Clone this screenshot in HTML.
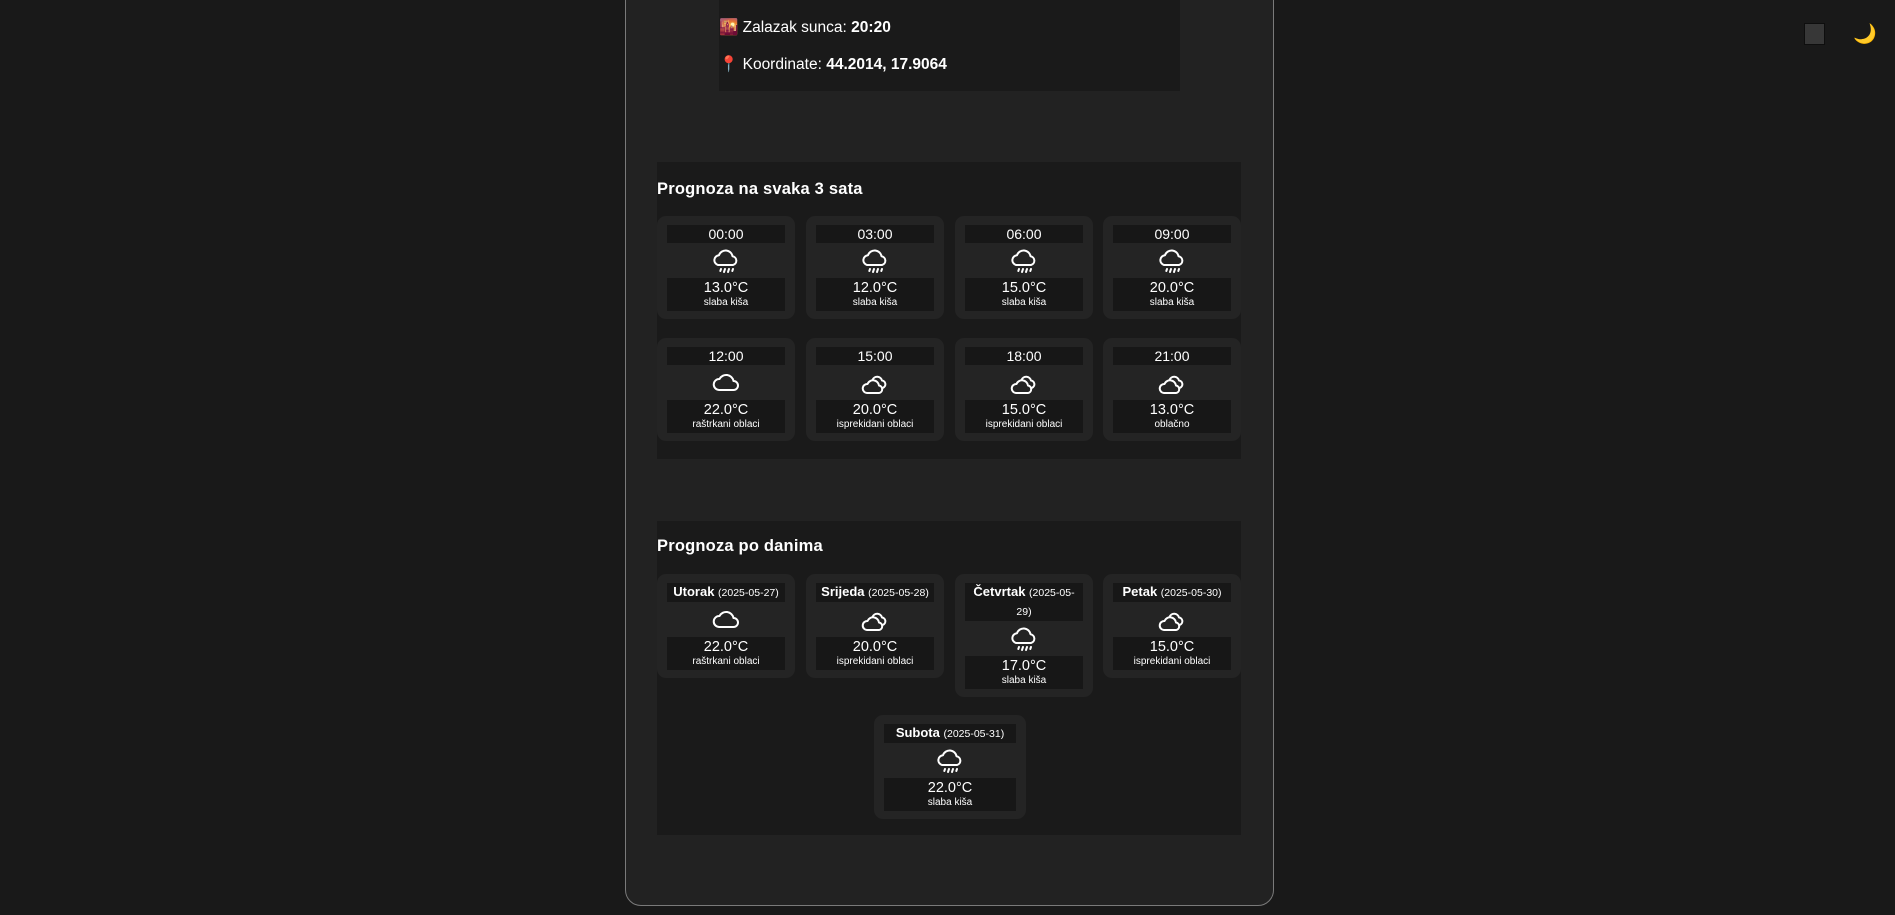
<!DOCTYPE html>
<html><head><meta charset="utf-8"><style>
*{box-sizing:border-box;margin:0;padding:0}
body{width:1895px;height:915px;background:#191919;color:#fff;font-family:"Liberation Sans",sans-serif;position:relative;overflow:hidden}
.outer{position:absolute;left:625px;top:-20px;width:649px;height:926px;background:#222;border:1px solid #7a7a7a;border-radius:16px}
.info{position:absolute;left:719px;top:0;width:461px;height:91px;background:#1a1a1a}
.info p{position:absolute;left:0;font-size:15.5px;white-space:nowrap}
.sec{position:absolute;left:657px;width:584px;background:#1a1a1a}
.sec h2{position:absolute;left:0;font-size:16.5px;font-weight:bold;letter-spacing:.2px}
.card{position:absolute;width:138px;background:#242424;border-radius:9px;padding:9px 10px 8px;text-align:center}
.tb{background:#171717;height:18px;font-size:14px;line-height:18px}
.ic{height:35px;display:flex;align-items:center;justify-content:center}
.tp{background:#171717;height:33px;padding-top:2px}
.tp .t{font-size:14.5px;line-height:17px}
.tp .d{font-size:10px;line-height:12px}
.db{background:#171717;font-size:13px;font-weight:bold;line-height:18px;min-height:18px}
.db small{font-size:10.5px;font-weight:normal}
svg{fill:none;stroke:#fff;stroke-width:2;stroke-linecap:round;stroke-linejoin:round}
</style></head><body>
<div class="outer"></div>
<div class="info">
<p style="top:18px">🌇 Zalazak sunca: <b>20:20</b></p>
<p style="top:55px">📍 Koordinate: <b>44.2014, 17.9064</b></p>
</div>

<svg width="0" height="0" style="position:absolute">
<defs>
<symbol id="rain" viewBox="0 0 30 30"><path d="M7 19 a5 5 0 0 1 1-9.8 a7 7 0 0 1 13.5 1 a4.5 4.5 0 0 1 0.5 8.8 z"/><path d="M10 23l-0.7 2M14 23l-1 3M18 23l-1 3M22 23l-0.7 2"/></symbol>
<symbol id="cloud" viewBox="0 0 30 30"><path d="M8 22 a5.5 5.5 0 0 1 0.5-11 a7.5 7.5 0 0 1 14 2 a4.5 4.5 0 0 1 0 9 z"/></symbol>
<symbol id="clouds" viewBox="0 0 30 30"><path d="M7 25 a4.5 4.5 0 0 1 0.5-9 a6 6 0 0 1 11.5 1.5 a3.8 3.8 0 0 1 0 7.5 z"/><path d="M12.5 12 a5 5 0 0 1 9.5 0.5 a3.8 3.8 0 0 1 1 7.3"/></symbol>
</defs></svg>

<div class="sec" style="top:162px;height:297px">
<h2 style="top:18px">Prognoza na svaka 3 sata</h2>
</div>

<div class="sec" style="top:521px;height:314px">
<h2 style="top:16px">Prognoza po danima</h2>
</div>

<div id="h"></div>

<div style="position:absolute;left:1804px;top:23px;width:21px;height:22px;background:#373737;border:1px solid #0e0e0e"></div>
<div style="position:absolute;left:1853px;top:22px;font-size:19px">🌙</div>

<script>
const H=[["00:00","rain","13.0","slaba kiša"],["03:00","rain","12.0","slaba kiša"],["06:00","rain","15.0","slaba kiša"],["09:00","rain","20.0","slaba kiša"],
["12:00","cloud","22.0","raštrkani oblaci"],["15:00","clouds","20.0","isprekidani oblaci"],["18:00","clouds","15.0","isprekidani oblaci"],["21:00","clouds","13.0","oblačno"]];
const xs=[657,806,955,1103];let s="";
H.forEach((h,i)=>{const top=i<4?216:338;s+=`<div class="card" style="left:${xs[i%4]}px;top:${top}px"><div class="tb">${h[0]}</div><div class="ic"><svg width="30" height="30"><use href="#${h[1]}"/></svg></div><div class="tp"><div class="t">${h[2]}°C</div><div class="d">${h[3]}</div></div></div>`});
const D=[["Utorak","2025-05-27","cloud","22.0","raštrkani oblaci",657,574],["Srijeda","2025-05-28","clouds","20.0","isprekidani oblaci",806,574],["Četvrtak","2025-05-29","rain","17.0","slaba kiša",955,574],["Petak","2025-05-30","clouds","15.0","isprekidani oblaci",1103,574],["Subota","2025-05-31","rain","22.0","slaba kiša",874,715]];
D.forEach(d=>{const lh=d[0]=="Četvrtak"?`<div class="db">${d[0]} <small>(2025-05-<br>29)</small></div>`:`<div class="db">${d[0]} <small>(${d[1]})</small></div>`;
s+=`<div class="card" style="left:${d[5]}px;top:${d[6]}px;${d[0]=="Subota"?"width:152px":""}">${lh}<div class="ic"><svg width="30" height="30"><use href="#${d[2]}"/></svg></div><div class="tp"><div class="t">${d[3]}°C</div><div class="d">${d[4]}</div></div></div>`});
document.getElementById("h").innerHTML=s;
</script>
</body></html>
